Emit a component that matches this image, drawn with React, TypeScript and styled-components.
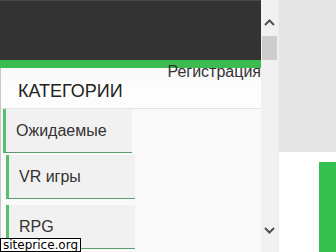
import styled, { createGlobalStyle } from "styled-components";

const GlobalStyle = createGlobalStyle`
    html, body {
    margin: 0;
    padding: 0;
    width: 336px;
    height: 252px;
    overflow: hidden;
    background: #fff;
    font-family: "Liberation Sans", Arial, sans-serif;
    }
`

const Screen = styled.div`
    position: relative;
    display: flex;
    width: 336px;
    height: 252px;
    overflow: hidden;
`

const Page = styled.div`
    width: 261px;
    display: flex;
    flex-direction: column;
    flex-shrink: 0;
`

const Header = styled.div`
    flex-shrink: 0;
    height: 60px;
    background: #333333;
    border-top: 1px solid #4a4a4a;
    box-sizing: border-box;
`

const Nav = styled.div`
    flex-shrink: 0;
    height: 8px;
    background: #3dbb50;
`

const Content = styled.div`
    flex: 1;
    min-height: 0;
    background: #fafafa;
    border-left: 1px solid #c9c9c9;
`

const UserRow = styled.div`
    display: flex;
    justify-content: flex-end;
    margin-top: -5px;
    height: 18px;
    font-size: 16px;
    line-height: 18px;
    color: #333;
    position: relative;
`

const Heading = styled.h2`
    margin: 0;
    padding: 0 0 6px 17px;
    font-size: 18px;
    font-weight: normal;
    line-height: 21px;
    color: #222;
    background: #fdfdfd;
    border-bottom: 1px solid #e3e3e3;
`

const List = styled.ul`
    list-style: none;
    margin: 0;
    padding: 0;
`

const Item = styled.li<{ $active?: boolean }>`
    width: 116px;
    margin: ${(p) => (p.$active ? "0 0 2px 2px" : "0 0 6px 5px")};
    padding: 13px 0 12px 10px;
    font-size: 16px;
    line-height: 18px;
    color: #333;
    background: #f1f1f1;
    border-left: 3px solid #55c168;
    border-bottom: 1px solid #5e9a70;
`

const Scrollbar = styled.div`
    width: 17px;
    flex-shrink: 0;
    background: #f1f1f1;
    display: flex;
    flex-direction: column;
    align-items: center;
    padding-top: 19px;
    box-sizing: border-box;
`

const Thumb = styled.div`
    width: 15px;
    height: 24px;
    margin-top: 10px;
    background: #cdcdcd;
`

const Spacer = styled.div`
    flex: 1;
`

const Arrow = styled.svg`
    display: block;
    margin-bottom: 18px;
`

const Side = styled.div`
    flex: 1;
    display: flex;
    flex-direction: column;
    background: #fff;
    border-left: 1px solid #ececec;
`

const SideTop = styled.div`
    flex-shrink: 0;
    height: 152px;
    background: #e5e5e5;
`

const SideBody = styled.div`
    flex: 1;
    display: flex;
    justify-content: flex-end;
    padding-top: 10px;
`

const GreenBlock = styled.div`
    width: 17px;
    background: #34bf4e;
`

const Watermark = styled.div`
    position: absolute;
    left: 0;
    bottom: 0;
    padding: 0 2px;
    font-family: "DejaVu Sans", sans-serif;
    font-size: 12px;
    line-height: 12px;
    color: #000;
    background: #fff;
    border: 1px solid #000;
`

const categories = ["Ожидаемые", "VR игры", "RPG"];

export default function App() {
    return (
        <>
            <GlobalStyle />
            <Screen>
                <Page>
                    <Header />
                    <Nav />
                    <Content>
                        <UserRow>Регистрация</UserRow>
                        <Heading>КАТЕГОРИИ</Heading>
                        <List>
                            {categories.map((c, i) => (
                                <Item key={c} $active={i === 0}>{c}</Item>
                            ))}
                        </List>
                    </Content>
                </Page>
                <Scrollbar>
                    <svg width="11" height="7" viewBox="0 0 11 7">
                        <path d="M1 6 L5.5 1.5 L10 6" fill="none" stroke="#505050" strokeWidth="2" />
                    </svg>
                    <Thumb />
                    <Spacer />
                    <Arrow width="11" height="7" viewBox="0 0 11 7">
                        <path d="M1 1 L5.5 5.5 L10 1" fill="none" stroke="#505050" strokeWidth="2" />
                    </Arrow>
                </Scrollbar>
                <Side>
                    <SideTop />
                    <SideBody>
                        <GreenBlock />
                    </SideBody>
                </Side>
                <Watermark>siteprice.org</Watermark>
            </Screen>
        </>
    )
}
